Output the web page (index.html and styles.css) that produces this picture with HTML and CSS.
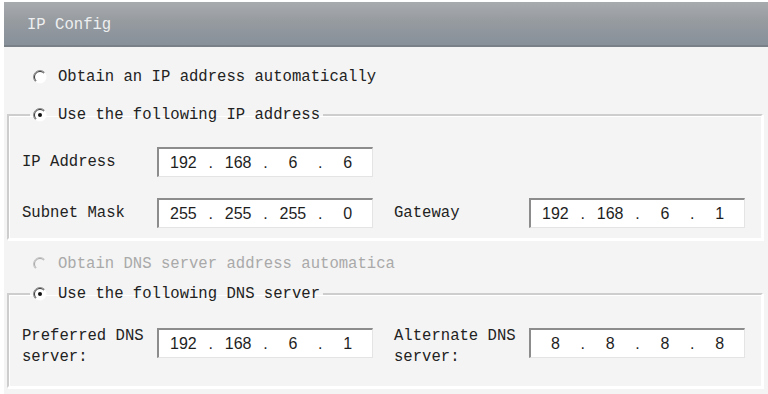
FILE: index.html
```html
<!DOCTYPE html>
<html lang="en">
<head>
  <meta charset="UTF-8" />
  <title>IP Config</title>
  <link rel="stylesheet" href="styles.css">
</head>
<body>
  <div class="window">
    <div class="titlebar">IP Config</div>
    <div class="content">

      <label class="opt">
        <svg class="radio" viewBox="0 0 14 14"><circle cx="7" cy="7" r="6.5" fill="#fff"/><path d="M11.6 2.4 A6.5 6.5 0 0 0 2.4 11.6" stroke="#8a8a8a" fill="none"/><path d="M10.9 3.1 A5.5 5.5 0 0 0 3.1 10.9" stroke="#3a3a3a" fill="none"/></svg>
        Obtain an IP address automatically
      </label>

      <fieldset class="group">
        <legend class="opt">
          <svg class="radio" viewBox="0 0 14 14"><circle cx="7" cy="7" r="6.5" fill="#fff"/><path d="M11.6 2.4 A6.5 6.5 0 0 0 2.4 11.6" stroke="#8a8a8a" fill="none"/><path d="M10.9 3.1 A5.5 5.5 0 0 0 3.1 10.9" stroke="#3a3a3a" fill="none"/><circle cx="7" cy="7" r="2" fill="#111"/></svg>
          Use the following IP address
        </legend>
        <div class="row">
          <span class="lbl">IP Address</span>
          <div class="ip"><span>192</span><i>.</i><span>168</span><i>.</i><span>6</span><i>.</i><span>6</span></div>
        </div>
        <div class="row">
          <span class="lbl">Subnet Mask</span>
          <div class="ip"><span>255</span><i>.</i><span>255</span><i>.</i><span>255</span><i>.</i><span>0</span></div>
          <span class="lbl second">Gateway</span>
          <div class="ip"><span>192</span><i>.</i><span>168</span><i>.</i><span>6</span><i>.</i><span>1</span></div>
        </div>
      </fieldset>

      <label class="opt disabled">
        <svg class="radio" viewBox="0 0 14 14"><circle cx="7" cy="7" r="6.5" fill="#f4f4f4"/><path d="M11.6 2.4 A6.5 6.5 0 0 0 2.4 11.6" stroke="#c4c4c4" fill="none"/><path d="M10.9 3.1 A5.5 5.5 0 0 0 3.1 10.9" stroke="#a8a8a8" fill="none"/></svg>
        Obtain DNS server address automatica
      </label>

      <fieldset class="group dns">
        <legend class="opt">
          <svg class="radio" viewBox="0 0 14 14"><circle cx="7" cy="7" r="6.5" fill="#fff"/><path d="M11.6 2.4 A6.5 6.5 0 0 0 2.4 11.6" stroke="#8a8a8a" fill="none"/><path d="M10.9 3.1 A5.5 5.5 0 0 0 3.1 10.9" stroke="#3a3a3a" fill="none"/><circle cx="7" cy="7" r="2" fill="#111"/></svg>
          Use the following DNS server
        </legend>
        <div class="row top">
          <span class="lbl two">Preferred DNS<br>server:</span>
          <div class="ip"><span>192</span><i>.</i><span>168</span><i>.</i><span>6</span><i>.</i><span>1</span></div>
          <span class="lbl two second">Alternate DNS<br>server:</span>
          <div class="ip"><span>8</span><i>.</i><span>8</span><i>.</i><span>8</span><i>.</i><span>8</span></div>
        </div>
      </fieldset>

    </div>
  </div>
</body>
</html>
```

FILE: styles.css
```css
body { margin: 0; background: #fff; font-family: "Liberation Mono", "DejaVu Sans Mono", monospace; font-size: 15.6px; color: #222; }

.window { margin: 2px 0 0 4px; height: 392px; display: flex; flex-direction: column; }

.titlebar { height: 43px; line-height: 46px; padding-left: 23px; color: #eeeff0; background: linear-gradient(#a8abae, #969ba0 45%, #88909a 95%); border-bottom: 2px solid #7a8087; }

.content { flex: 1; background: #f4f4f4; padding: 20px 5px 0 3px; }

.opt { display: flex; align-items: center; height: 20px; line-height: 20px; padding-left: 26px; }
.opt.disabled { color: #a9a9a9; margin-top: 14px; }
.radio { width: 14px; height: 14px; margin-right: 11px; flex: none; }

.group { margin: 18px 0 0 0; padding: 22px 10px 10px 13px; border: 2px solid; border-color: #cdcdcd #fff #fff #cdcdcd; box-shadow: inset 1px 1px 0 #fff, 1px 1px 0 #fff; }
.group legend.opt { padding: 0 3px; margin-left: 8px; }
.group.dns { margin-top: 10px; padding-top: 24px; padding-bottom: 18px; }

.row { display: flex; align-items: center; }
.row.top { align-items: flex-start; }
.row + .row { margin-top: 21px; }
.lbl { width: 135px; flex: none; }
.lbl.second { margin-left: 21px; }
.lbl.two { line-height: 21px; margin-top: -2px; }

.ip { width: 216px; height: 30px; box-sizing: border-box; display: flex; align-items: center; background: #fff; border-top: 2px solid #8c8c8c; border-left: 2px solid #8c8c8c; border-right: 1px solid #e4e4e4; border-bottom: 1px solid #e4e4e4; font-family: "Liberation Sans", Arial, sans-serif; font-size: 16px; color: #1e1e1e; }
.ip span { flex: 1; text-align: center; }
.ip i { font-style: normal; width: 6px; text-align: center; }
```
